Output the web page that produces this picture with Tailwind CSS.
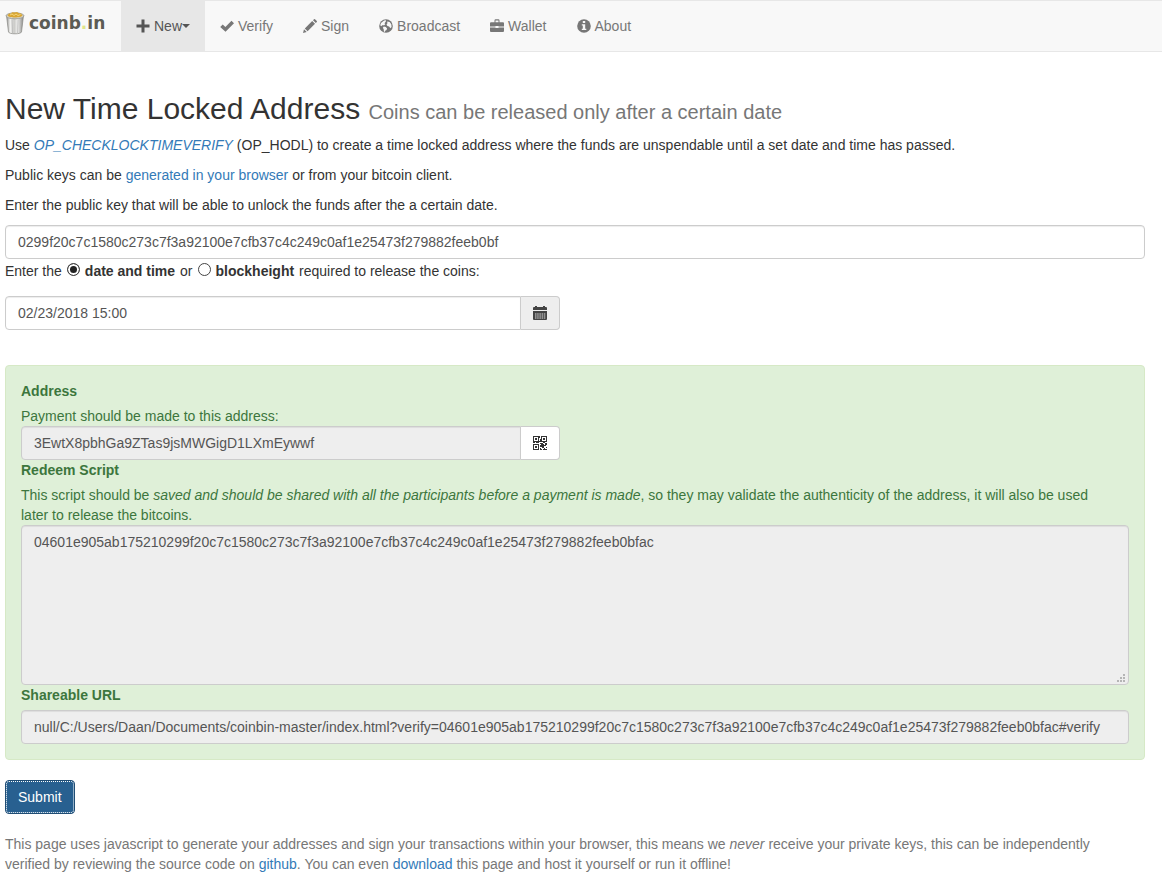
<!DOCTYPE html>
<html lang="en">
<head>
<meta charset="utf-8">
<meta name="viewport" content="width=device-width, initial-scale=1">
<title>coinb.in - New Time Locked Address</title>
<script src="https://cdn.jsdelivr.net/npm/@tailwindcss/browser@4"></script>
</head>
<body class="bg-white font-['Liberation_Sans',Arial,sans-serif] text-sm leading-5 text-[#333]">
<header class="flex border-y border-[#e7e7e7] bg-[#f8f8f8] text-[#777]">
  <a href="#home" class="flex w-[121px] items-start gap-1 pl-[5px] pt-[10px] font-['DejaVu_Sans',sans-serif] text-[17px] font-bold leading-6 text-[#5c5c54]" aria-label="coinb.in">
    <svg class="h-6 w-5" viewBox="0 0 20 24" aria-hidden="true">
      <defs>
        <linearGradient id="can" x1="0" x2="1" y1="0" y2="0">
          <stop offset="0" stop-color="#8c8c8a"/><stop offset=".22" stop-color="#f4f4f2"/><stop offset=".45" stop-color="#c9c9c6"/><stop offset=".65" stop-color="#f1f1ef"/><stop offset="1" stop-color="#858583"/>
        </linearGradient>
      </defs>
      <path d="M1.5 4.5 3.5 21c.6 2.400 12.400 2.400 13 0l2-16.500z" fill="url(#can)" stroke="#888884" stroke-width=".7"/>
      <path d="M7 8.500 7.500 22M13 8.500 12.500 22" stroke="#aaa" stroke-width=".6"/>
      <ellipse cx="10" cy="4.800" rx="9" ry="3" fill="#d8d6cc" stroke="#96958e" stroke-width=".8"/>
      <path d="M2.500 4.500 4 2.500 6 2.800 7 1.200 9.500 1.600 12 1 14 2.300 16 2.500 17.500 4.500c-1 2.600-14 2.600-15 0z" fill="#d9a633"/>
      <path d="m5 4 2-1 2 1.500 2-1.500 2 1.500 2.500-1" fill="none" stroke="#f5d77a" stroke-width="1"/>
    </svg>
    <span>coinb<span class="text-[#dfe58a]">.</span>in</span>
  </a>
  <nav class="flex" aria-label="Main">
    <button type="button" class="flex items-center bg-[#e7e7e7] p-[15px] text-[#555]" aria-haspopup="true">
      <svg class="mr-1 size-[14px]" viewBox="0 0 14 14" fill="currentColor" aria-hidden="true"><path d="M5.500 .5h3v5h5v3h-5v5h-3v-5h-5v-3h5z"/></svg>New<svg class="h-1 w-2" viewBox="0 0 8 4" fill="currentColor" aria-hidden="true"><path d="M0 0h8L4 4z"/></svg>
    </button>
    <a href="#verify" class="flex items-center gap-1 p-[15px]"><svg class="size-[14px]" viewBox="0 0 14 14" fill="currentColor" aria-hidden="true"><path d="M.2 7.900 2.700 5.400 5.400 7.900 11.500 1.700 14 4.200 5.500 12.800z"/></svg>Verify</a>
    <a href="#sign" class="flex items-center gap-1 p-[15px]"><svg class="size-[14px]" viewBox="0 0 14 14" fill="currentColor" aria-hidden="true"><path d="M0 14 1 10.300 3.700 13zM1.800 9.400 9.200 2l2.800 2.800-7.400 7.400zM10 1.200 11 .2q.5-.4 1 0L13.800 2q.4.5 0 1l-1 1z"/></svg>Sign</a>
    <a href="#broadcast" class="flex items-center gap-1 p-[15px]"><svg class="size-[14px]" viewBox="0 0 14 14" aria-hidden="true"><circle cx="7" cy="7" r="6.800" fill="currentColor"/><path d="M4.800 1.700 6.700 1l.2 1.600L5.500 4.300l.8.9-1.100 1-2.100.1-.7 1L1.200 6.200 2 4zM8.200 2.600l2.400.3 1.700 2.400.3 2.600-1.200 1.300-1.300-1.800-1.700-.3-.9-1.600.9-1.100zM4.800 7.400l2 .7 1.300 1.300-.6 1.500-1.300.9-.3 1.200-1-.6-.2-2.100-.9-1.500z" fill="#f8f8f8"/></svg>Broadcast</a>
    <a href="#wallet" class="flex items-center gap-1 p-[15px]"><svg class="size-[14px]" viewBox="0 0 14 14" aria-hidden="true"><path d="M0 4.200q0-1 1-1h3.500V1.500q0-1.200 1.200-1.200h2.600q1.200 0 1.200 1.200v1.700H13q1 0 1 1v3.300H8.500V7h-3v.5H0zm5.500-1h3V1.400h-3zM0 8.500h5.500V9h3v-.5H14v3.600q0 .9-1 .9H1q-1 0-1-.9z" fill="currentColor"/></svg>Wallet</a>
    <a href="#about" class="flex items-center gap-1 p-[15px]"><svg class="size-[14px]" viewBox="0 0 14 14" aria-hidden="true"><circle cx="7" cy="7" r="6.800" fill="currentColor"/><path d="M5.800 1.900h2.400v2H5.800zM4.800 5.200h3.400v4.500h1.100V11H4.800V9.700h1V6.500h-1z" fill="#f8f8f8"/></svg>About</a>
  </nav>
</header>

<main class="pl-[5px] pr-[17px] pt-10">
  <h1 class="mb-[10px] text-[30px] leading-[33px]">New Time Locked Address <small class="text-xl leading-5 text-[#777]">Coins can be released only after a certain date</small></h1>
  <p class="mb-[10px]">Use <a href="#cltv" class="italic text-[#337ab7]">OP_CHECKLOCKTIMEVERIFY</a> (OP_HODL) to create a time locked address where the funds are unspendable until a set date and time has passed.</p>
  <p class="mb-[10px]">Public keys can be <a href="#newAddress" class="text-[#337ab7]">generated in your browser</a> or from your bitcoin client.</p>
  <label for="pubkey" class="mb-[10px] block">Enter the public key that will be able to unlock the funds after the a certain date.</label>
  <input id="pubkey" type="text" value="0299f20c7c1580c273c7f3a92100e7cfb37c4c249c0af1e25473f279882feeb0bf" class="block h-[34px] w-full rounded border border-[#ccc] px-3 text-[#555] shadow-[inset_0_1px_1px_rgba(0,0,0,0.075)]">
  <div class="mb-[15px] mt-0.5 flex items-center gap-[5px]">
    <span>Enter the</span>
    <input id="bydate" name="locktype" type="radio" checked class="mb-1 size-[13px] appearance-none rounded-full border border-[#444] bg-white checked:bg-[#222] checked:shadow-[inset_0_0_0_2px_white]">
    <label for="bydate" class="font-bold">date and time</label>
    <span>or</span>
    <input id="byblock" name="locktype" type="radio" class="mb-1 size-[13px] appearance-none rounded-full border border-[#444] bg-white checked:bg-[#222] checked:shadow-[inset_0_0_0_2px_white]">
    <label for="byblock" class="font-bold">blockheight</label>
    <span>required to release the coins:</span>
  </div>
  <div class="mb-[35px] w-1/2 pr-[15px]">
    <div class="flex h-[34px]">
      <input type="text" aria-label="Date and time" value="02/23/2018 15:00" class="min-w-0 flex-1 rounded-l border border-[#ccc] px-3 text-[#555] shadow-[inset_0_1px_1px_rgba(0,0,0,0.075)]">
      <button type="button" aria-label="Open calendar" class="flex w-[39px] items-center justify-center rounded-r border border-l-0 border-[#ccc] bg-[#eee] text-[#444]">
        <svg class="size-[14px]" viewBox="0 0 14 14" aria-hidden="true"><path d="M0 2q0-1 1-1h1V0h2v1h6V0h2v1h1q1 0 1 1v2H0zM0 5h14v8q0 1-1 1H1q-1 0-1-1z" fill="currentColor"/><path d="M2 8h10.500M2 10h10.500M2 12h10.500" stroke="#ddd" stroke-dasharray="1.500 .7"/></svg>
      </button>
    </div>
  </div>

  <section class="mb-5 rounded border border-[#d6e9c6] bg-[#dff0d8] p-[15px] text-[#3c763d]">
    <label for="address" class="mb-[5px] block font-bold">Address</label>
    <p>Payment should be made to this address:</p>
    <div class="w-1/2 pr-[15px]">
      <div class="flex h-[34px]">
        <input id="address" type="text" readonly value="3EwtX8pbhGa9ZTas9jsMWGigD1LXmEywwf" class="min-w-0 flex-1 rounded-l border border-[#ccc] bg-[#eee] px-3 text-[#555] shadow-[inset_0_1px_1px_rgba(0,0,0,0.075)]">
        <button type="button" aria-label="Show QR code" class="flex w-[39px] items-center justify-center rounded-r border border-l-0 border-[#ccc] bg-white text-[#333]">
          <svg class="size-[14px]" viewBox="0 0 14 14" fill="currentColor" aria-hidden="true"><path fill-rule="evenodd" d="M0 0h6v6H0zm1 1v4h4V1zM8 0h6v6H8zm1 1v4h4V1zM0 8h6v6H0zm1 1v4h4V9z"/><path d="M2 2h2v2H2zM10 2h2v2h-2zM2 10h2v2H2zM6 0h1v2H6zM7 3h1v3H6V5h1zM0 6h2v1H0zM3 6h3v1H3zM7 7h3v1h1v1h1V7h2v2h-1v1h-2v2H9v-1H7V9h1V8H7zM7 12h1v1h1v1H7zM10 13h1v-1h1v1h2v1h-4zM13 11h1v1h-1zM10 6h2v1h-2z"/></svg>
        </button>
      </div>
    </div>
    <label for="script" class="mb-[5px] block font-bold">Redeem Script</label>
    <p>This script should be <em>saved and should be shared with all the participants before a payment is made</em>, so they may validate the authenticity of the address, it will also be used<br>later to release the bitcoins.</p>
    <div class="relative">
      <textarea id="script" readonly class="block h-[160px] w-full resize-none rounded border border-[#ccc] bg-[#eee] px-3 py-1.5 text-[#555] shadow-[inset_0_1px_1px_rgba(0,0,0,0.075)]">04601e905ab175210299f20c7c1580c273c7f3a92100e7cfb37c4c249c0af1e25473f279882feeb0bfac</textarea>
      <svg class="pointer-events-none absolute bottom-[3px] right-1 size-2" viewBox="0 0 8 8" fill="#b5b5b5" aria-hidden="true"><path d="M6 0h2v2H6zM3 3h2v2H3zM6 3h2v2H6zM0 6h2v2H0zM3 6h2v2H3zM6 6h2v2H6z"/></svg>
    </div>
    <label for="share" class="mb-[5px] block font-bold">Shareable URL</label>
    <input id="share" type="text" readonly value="null/C:/Users/Daan/Documents/coinbin-master/index.html?verify=04601e905ab175210299f20c7c1580c273c7f3a92100e7cfb37c4c249c0af1e25473f279882feeb0bfac#verify" class="block h-[34px] w-full rounded border border-[#ccc] bg-[#eee] px-3 text-[#555] shadow-[inset_0_1px_1px_rgba(0,0,0,0.075)]">
  </section>

  <button type="submit" class="mb-5 block h-[34px] rounded border border-[#204d74] bg-[#286090] px-3 text-white outline-1 -outline-offset-2 outline-dotted outline-white">Submit</button>
  <p class="text-[#777]">This page uses javascript to generate your addresses and sign your transactions within your browser, this means we <em>never</em> receive your private keys, this can be independently<br>verified by reviewing the source code on <a href="#github" class="text-[#337ab7]">github</a>. You can even <a href="#download" class="text-[#337ab7]">download</a> this page and host it yourself or run it offline!</p>
</main>
</body>
</html>
